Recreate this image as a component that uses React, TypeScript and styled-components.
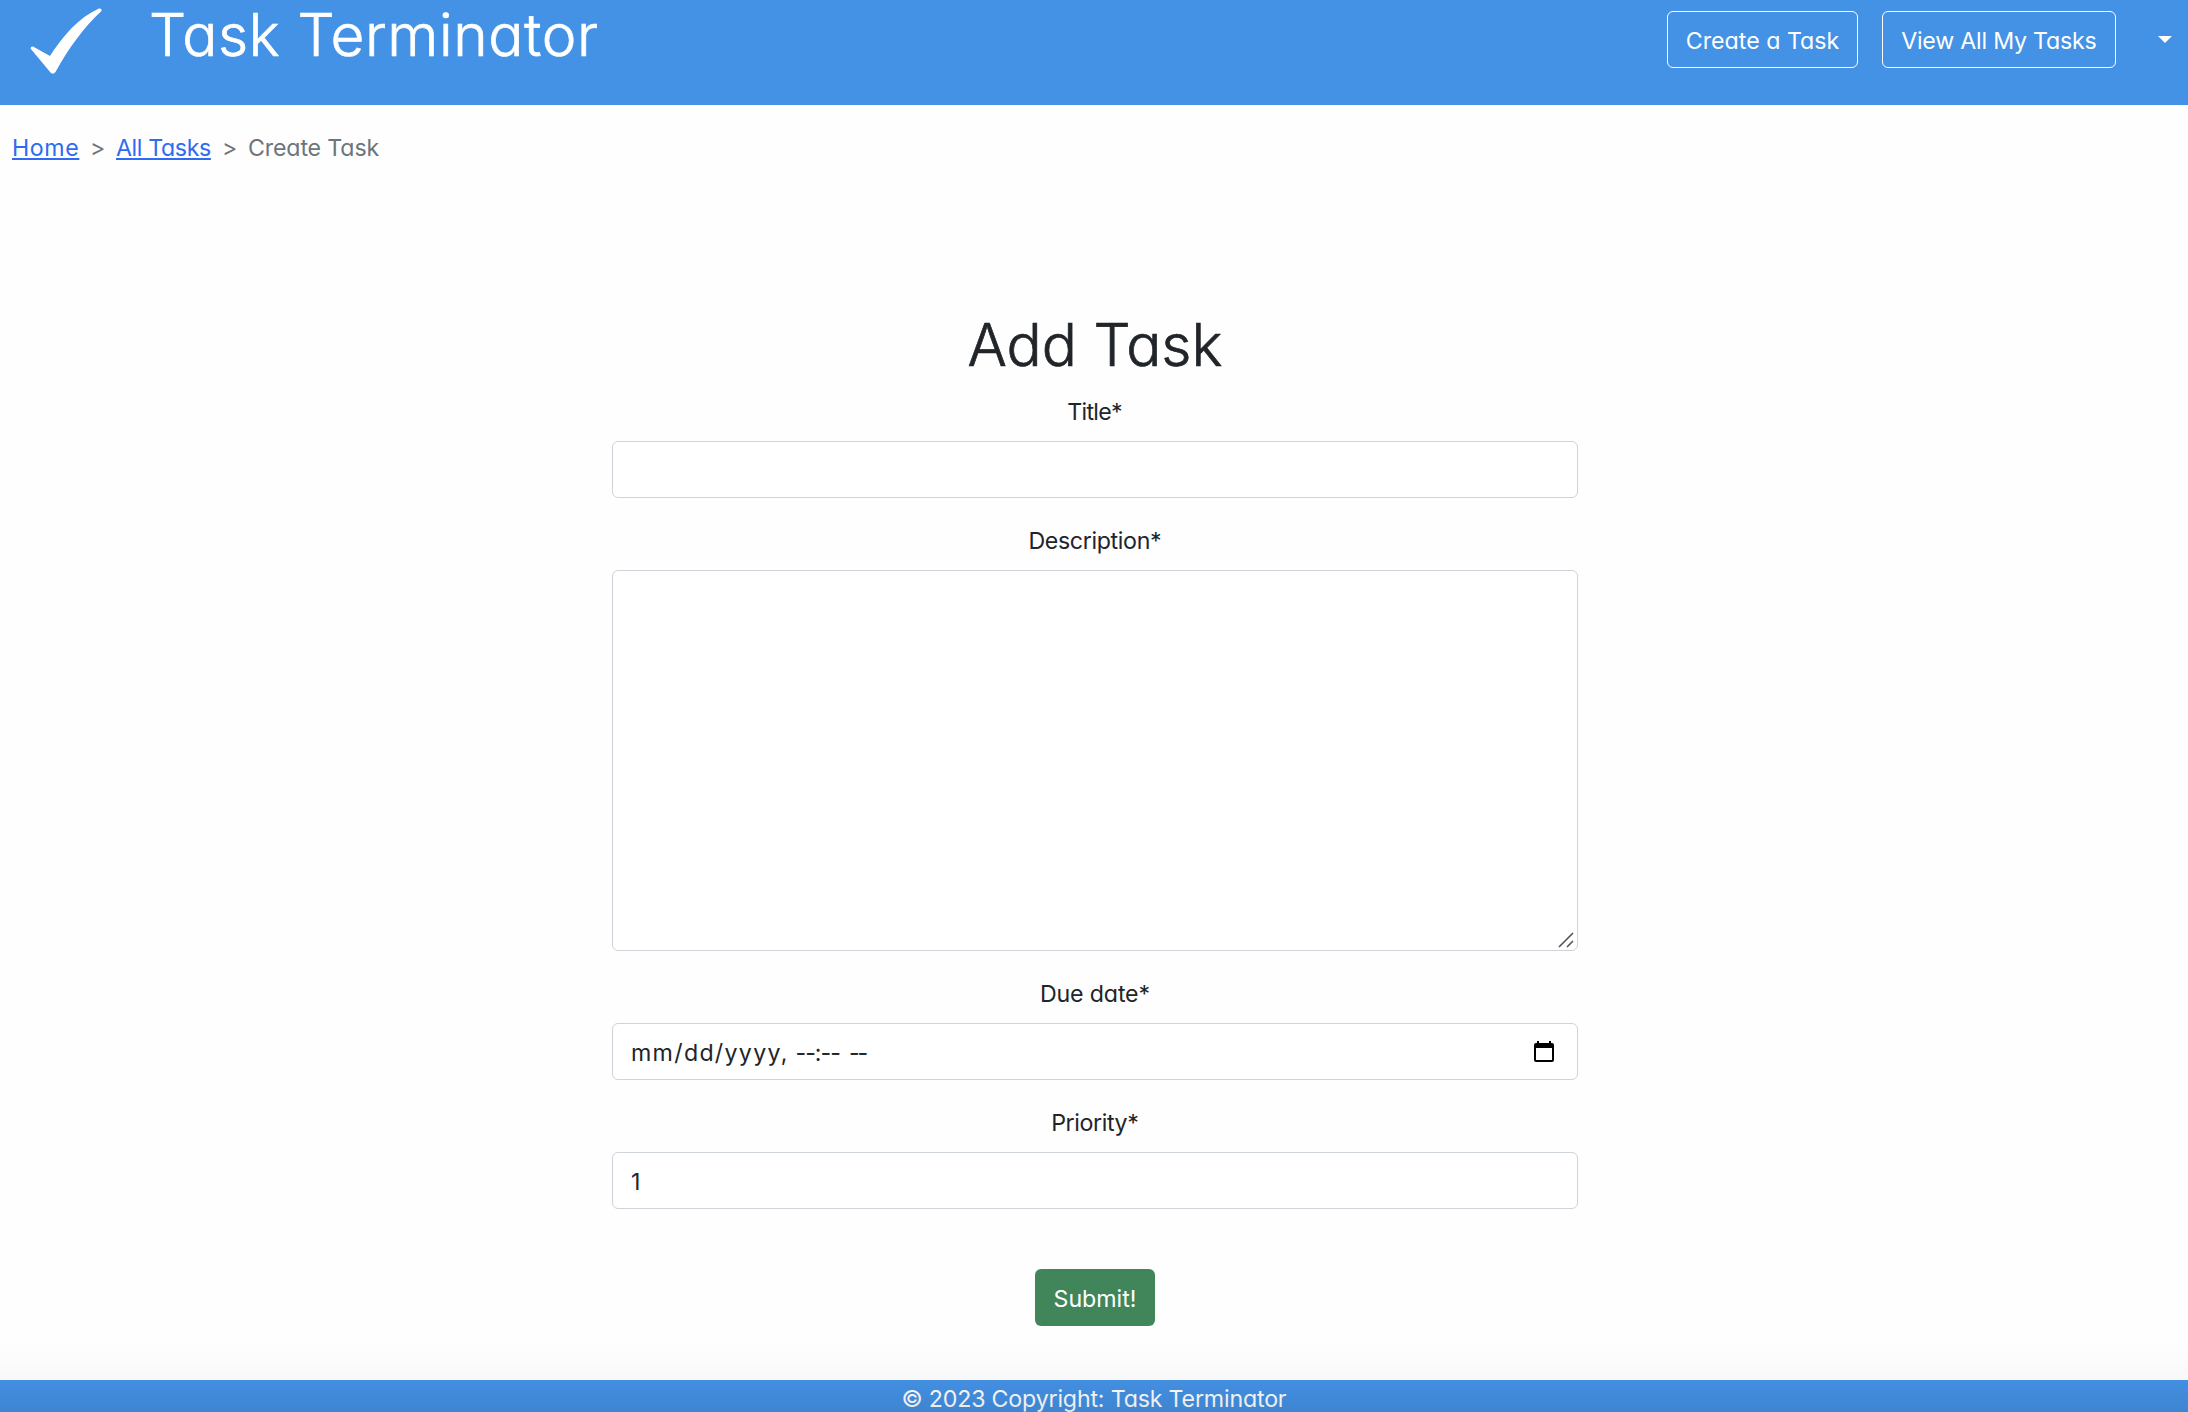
import React from "react";
import styled, { createGlobalStyle } from "styled-components";

const Global = createGlobalStyle`
  *, *::before, *::after { box-sizing: border-box; }
  html, body { margin: 0; height: 100%; overflow: hidden; }
  body {
    background: #fefefe;
    color: #212529;
    font-family: Inter, Lato, "Liberation Sans", sans-serif;
    font-feature-settings: "cv11" 1;
    font-size: 23.2px;
    line-height: 36px;
  }
`;

const Page = styled.div`
  position: relative;
  display: flex;
  flex-direction: column;
  height: 1412px;
  width: 2188px;
  overflow: hidden;
`;

const Header = styled.header`
  display: flex;
  align-items: flex-start;
  height: 105px;
  padding-right: 16px;
  background: #4492e6;
  color: #fff;
`;

const Logo = styled.svg`
  width: 72px;
  height: 70px;
  margin: 6px 0 0 30px;
`;

const Track = styled.span<{ $t?: number }>`
  letter-spacing: ${(p) => p.$t ?? 0}px;
  margin-right: ${(p) => -(p.$t ?? 0)}px;
`;

/* Body-size text, its baseline one pixel below the centre of a 36px line. */
const Text = styled(Track)`
  display: inline-block;
  line-height: 38px;
  margin-bottom: -2px;
  white-space: pre;
`;

const Title = styled.h1`
  margin: 0;
  font-size: 58.5px;
  font-weight: 300;
  line-height: 72px;
  white-space: nowrap;
  -webkit-text-stroke: 0.7px currentColor;
`;

const Brand = styled(Title)`
  margin: -1px 0 0 47px;
`;

const Nav = styled.nav`
  display: flex;
  align-items: center;
  gap: 24px;
  margin: 11px 0 0 auto;
`;

const OutlineButton = styled.button<{ $w: number }>`
  display: flex;
  align-items: center;
  justify-content: center;
  width: ${(p) => p.$w}px;
  height: 57px;
  padding: 0;
  border: 1px solid #fff;
  border-radius: 6px;
  background: transparent;
  color: #fff;
  font: inherit;
  font-feature-settings: inherit;
  white-space: nowrap;
`;

const Caret = styled.span`
  margin-left: 18px;
  border: 7px solid transparent;
  border-top-color: #fff;
  border-bottom: 0;
`;

const Crumbs = styled.ol`
  display: flex;
  margin: 25px 0 0;
  padding: 0 12px;
  list-style: none;
  color: #6c757d;
`;

const Crumb = styled.li<{ $w: number }>`
  width: ${(p) => p.$w}px;
  white-space: nowrap;
`;

const CrumbLink = styled.a`
  color: #2f6bf2;
  text-decoration: underline;
  text-decoration-thickness: 2px;
  text-underline-offset: 2px;
  text-decoration-skip-ink: none;
`;

const Form = styled.form`
  display: flex;
  flex-direction: column;
  align-items: center;
  width: 966px;
  margin: 143px 0 0 612px;
`;

const Heading = styled(Title)`
  margin-bottom: 12px;
`;

const Field = styled.div`
  display: flex;
  flex-direction: column;
  align-items: center;
  gap: 12px;
  width: 100%;
  margin-bottom: 24px;
`;

const Control = styled.div<{ $h?: number }>`
  position: relative;
  display: flex;
  align-items: center;
  width: 100%;
  height: ${(p) => p.$h ?? 57}px;
  padding: 0 23px 0 18px;
  border: 1px solid #ced4da;
  border-radius: 6px;
  background: #fff;
`;

const DateParts = styled.div`
  display: flex;
  gap: 8px;
  margin-right: auto;
`;

const Grip = styled.svg`
  position: absolute;
  right: 3px;
  bottom: 2px;
  width: 16px;
  height: 16px;
`;

const Calendar = styled.svg`
  width: 20px;
  height: 21px;
`;

const Submit = styled.button`
  display: flex;
  align-items: center;
  justify-content: center;
  width: 120px;
  height: 57px;
  margin-top: 36px;
  padding: 0;
  border: 0;
  border-radius: 6px;
  background: #41865a;
  color: #fff;
  font: inherit;
  font-feature-settings: inherit;
`;

const Footer = styled.footer`
  display: flex;
  align-items: flex-start;
  justify-content: center;
  height: 32px;
  margin-top: auto;
  background: #4492e6;
  color: #fff;
`;

const Shade = styled.div`
  position: absolute;
  inset: auto 0 0 0;
  height: 72px;
  background: linear-gradient(
    rgba(0, 0, 0, 0),
    rgba(0, 0, 0, 0.008) 25%,
    rgba(0, 0, 0, 0.025) 55%,
    rgba(0, 0, 0, 0.09)
  );
  pointer-events: none;
`;

export default function App() {
  return (
    <Page>
      <Global />
      <Header>
        <Logo viewBox="0 0 72 70" fill="#fff">
          <path d="M0.5 42.5 Q1 40 3 40.5 L20 50 C33 30 48 12 69 2.5 Q72 2 71.5 5 C54 21 38 43 25.5 66 Q23 69 20.5 66.5 Z" />
        </Logo>
        <Brand><Track $t={0.6}>Task Terminator</Track></Brand>
        <Nav>
          <OutlineButton type="button" $w={191}><Text>Create a Task</Text></OutlineButton>
          <OutlineButton type="button" $w={234}><Text $t={-0.22}>View All My Tasks</Text></OutlineButton>
          <Caret />
        </Nav>
      </Header>
      <Crumbs>
        <Crumb $w={78}><CrumbLink><Track $t={0.6}>Home</Track></CrumbLink></Crumb>
        <Crumb $w={26}>&gt;</Crumb>
        <Crumb $w={106}><CrumbLink><Track $t={-0.38}>All Tasks</Track></CrumbLink></Crumb>
        <Crumb $w={26}>&gt;</Crumb>
        <Crumb $w={140}><Track $t={-0.15}>Create Task</Track></Crumb>
      </Crumbs>
      <Form>
        <Heading><Track>Add Task</Track></Heading>
        <Field><Text $t={-0.7}>Title*</Text><Control /></Field>
        <Field>
          <Text $t={-0.35}>Description*</Text>
          <Control $h={381}>
            <Grip viewBox="0 0 16 16" stroke="#555" strokeWidth="1.6">
              <path d="M1 15 L15 1 M9 15 L15 9" />
            </Grip>
          </Control>
        </Field>
        <Field>
          <Text $t={-0.15}>Due date*</Text>
          <Control>
            <DateParts>
              <Text $t={1.3}>mm/dd/yyyy,</Text>
              <Text $t={-1}>--:--</Text>
              <Text $t={-2}>--</Text>
            </DateParts>
            <Calendar viewBox="0 0 20 21">
              <path fillRule="evenodd" d="M3 0h2v2h10V0h2v2h1q2 0 2 2v15q0 2-2 2H2q-2 0-2-2V4q0-2 2-2h1zM2 7v12h16V7z" />
            </Calendar>
          </Control>
        </Field>
        <Field><Text $t={-0.4}>Priority*</Text><Control><Text>1</Text></Control></Field>
        <Submit type="button"><Text>Submit!</Text></Submit>
      </Form>
      <Footer><Text $t={-0.18}>© 2023 Copyright: Task Terminator</Text></Footer>
      <Shade />
    </Page>
  );
}
